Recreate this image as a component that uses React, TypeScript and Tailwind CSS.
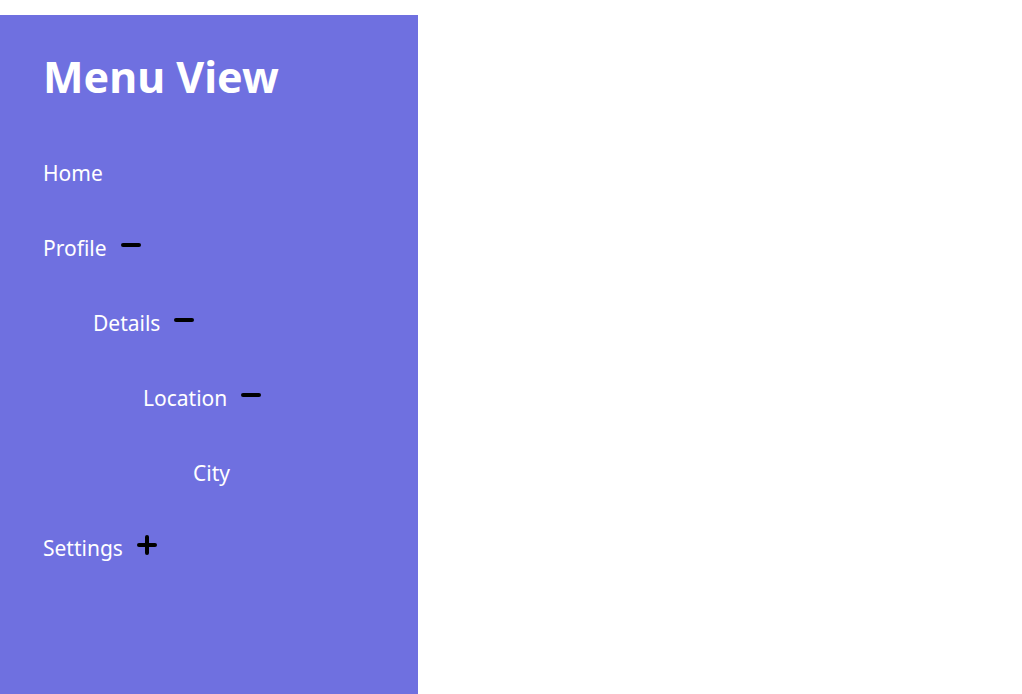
import React, { useState } from 'react';

interface MenuNode {
    label: string;
    children?: MenuNode[];
}

const menu: MenuNode[] = [
    { label: 'Home' },
    {
        label: 'Profile',
        children: [
            {
                label: 'Details',
                children: [{ label: 'Location', children: [{ label: 'City' }] }],
            },
        ],
    },
    { label: 'Settings', children: [{ label: 'Privacy' }] },
];

const Toggle: React.FC<{ open: boolean }> = ({ open }) => (
    <svg width="20" height="20" viewBox="0 0 20 20" className="-mt-[7px]">
        <line x1="2" y1="10" x2="18" y2="10" stroke="black" strokeWidth="4" strokeLinecap="round" />
        {!open && <line x1="10" y1="2" x2="10" y2="18" stroke="black" strokeWidth="4" strokeLinecap="round" />}
    </svg>
);

const MenuItem: React.FC<{ node: MenuNode; depth: number; initialOpen: Set<string> }> = ({ node, depth, initialOpen }) => {
    const [open, setOpen] = useState(initialOpen.has(node.label));
    const hasChildren = !!node.children?.length;

    return (
        <li>
            <div className="h-[75px] flex items-center gap-[14px]" style={{ paddingLeft: depth * 50 }}>
                <span className="text-[21px] text-white">{node.label}</span>
                {hasChildren && (
                    <button onClick={() => setOpen(!open)} className="flex items-center">
                        <Toggle open={open} />
                    </button>
                )}
            </div>
            {hasChildren && open && (
                <ul>
                    {node.children!.map((child) => (
                        <MenuItem key={child.label} node={child} depth={depth + 1} initialOpen={initialOpen} />
                    ))}
                </ul>
            )}
        </li>
    );
};

export default function App() {
    const initialOpen = new Set(['Profile', 'Details', 'Location']);

    return (
        <div className="min-h-[694px] bg-white pt-[15px]" style={{ fontFamily: '"Noto Sans", sans-serif' }}>
            <div className="w-[418px] h-[679px] bg-[#6f70e0] px-[43px] pt-[34px]">
                <h1 className="text-[43px] leading-[56px] font-bold text-white">Menu View</h1>
                <ul className="mt-[31px]">
                    {menu.map((node) => (
                        <MenuItem key={node.label} node={node} depth={0} initialOpen={initialOpen} />
                    ))}
                </ul>
            </div>
        </div>
    );
}
